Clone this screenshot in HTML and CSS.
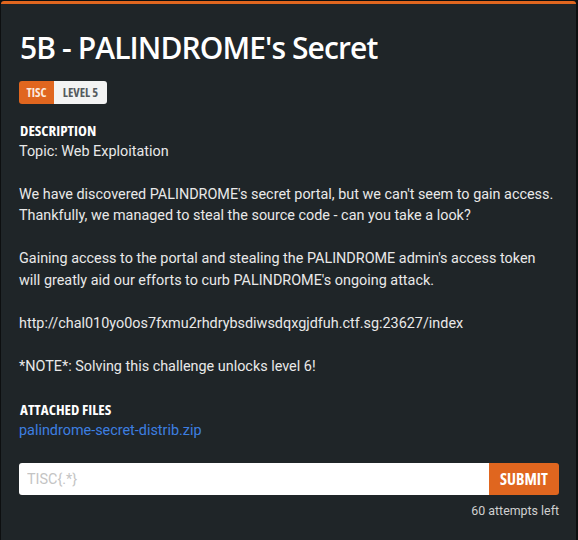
FILE: index.html
```html
<!DOCTYPE html>
<html lang="en">
<head>
<meta charset="utf-8">
<title>5B - PALINDROME's Secret</title>
<link rel="stylesheet" href="styles.css">
</head>
<body>
<div class="panel">
  <h1 class="title">5B - PALINDROME's Secret</h1>
  <div class="badges">
    <span class="badge badge-cat">TISC</span><span class="badge badge-level">LEVEL 5</span>
  </div>
  <h2 class="section-title">DESCRIPTION</h2>
  <div class="desc">Topic: Web Exploitation

We have discovered PALINDROME's secret portal, but we can't seem to gain access.
Thankfully, we managed to steal the source code - can you take a look?

Gaining access to the portal and stealing the PALINDROME admin's access token
will greatly aid our efforts to curb PALINDROME's ongoing attack.

http://chal010yo0os7fxmu2rhdrybsdiwsdqxgjdfuh.ctf.sg:23627/index

*NOTE*: Solving this challenge unlocks level 6!</div>
  <h2 class="section-title files-title">ATTACHED FILES</h2>
  <a class="file-link" href="#">palindrome-secret-distrib.zip</a>
  <form class="flag-form">
    <input class="flag-input" type="text" placeholder="TISC{.*}">
    <button class="flag-submit" type="button">SUBMIT</button>
  </form>
  <div class="attempts">60 attempts left</div>
</div>
</body>
</html>
```
FILE: styles.css
```css
html, body {
  margin: 0;
  padding: 0;
}
body {
  background: #0d0f10;
  width: 578px;
  height: 540px;
  overflow: hidden;
}
.panel {
  box-sizing: border-box;
  width: 575px;
  height: 545px;
  margin: 1px 0 0 1px;
  background: #1f2528;
  border-top: 3px solid #e0661f;
  border-radius: 3px 3px 0 0;
  padding: 26px 17px 0 18px;
  color: #ebebeb;
  font-family: Roboto, "Liberation Sans", sans-serif;
}
.title {
  margin: 0;
  font-family: "Open Sans", "DejaVu Sans Condensed", sans-serif;
  font-weight: 600;
  font-size: 30px;
  letter-spacing: -0.9px;
  line-height: 36px;
  color: #ffffff;
  padding-left: 1px;
}
.badges {
  display: flex;
  margin-top: 15px;
  height: 23px;
}
.badge {
  display: flex;
  align-items: center;
  font-family: "Open Sans", "DejaVu Sans Condensed", sans-serif;
  font-stretch: 82%;
  font-weight: 700;
  font-size: 12.5px;
  height: 23px;
}
.badge-cat {
  background: #e0661f;
  color: #fbe9dd;
  width: 35px;
  justify-content: center;
  border-radius: 3px 0 0 3px;
}
.badge-level {
  background: #f3f3f3;
  color: #555a5e;
  width: 53px;
  justify-content: center;
  border-radius: 0 3px 3px 0;
}
.section-title {
  margin: 17px 0 0 0;
  font-family: "Open Sans", "DejaVu Sans Condensed", sans-serif;
  font-stretch: 80%;
  font-weight: 700;
  font-size: 15px;
  line-height: 19.5px;
  color: #ffffff;
  padding-left: 1px;
}
.desc {
  white-space: pre-line;
  font-size: 14.4px;
  line-height: 21.5px;
  color: #e9e9e9;
}
.files-title {
  margin-top: 23px;
}
.file-link {
  display: block;
  font-size: 14.4px;
  line-height: 21.5px;
  color: #3d7fe0;
  text-decoration: none;
}
.flag-form {
  display: flex;
  margin: 22px 0 0 0;
  height: 32px;
  width: 540px;
}
.flag-input {
  flex: 1;
  box-sizing: border-box;
  height: 32px;
  border: none;
  outline: none;
  margin: 0;
  padding: 0 8px;
  background: #ffffff;
  border-radius: 3px 0 0 3px;
  font-family: Roboto, "Liberation Sans", sans-serif;
  font-size: 14.4px;
  color: #333;
}
.flag-input::placeholder {
  color: #c4c4c4;
}
.flag-submit {
  width: 70px;
  height: 32px;
  margin: 0;
  border: none;
  padding: 0;
  background: #e0661f;
  color: #ffffff;
  border-radius: 0 3px 3px 0;
  font-family: "Open Sans", "DejaVu Sans Condensed", sans-serif;
  font-stretch: 82%;
  font-weight: 700;
  font-size: 16px;
}
.attempts {
  width: 540px;
  margin-top: 7px;
  text-align: right;
  font-size: 12.4px;
  line-height: 18px;
  color: #d0d0d0;
}
```
